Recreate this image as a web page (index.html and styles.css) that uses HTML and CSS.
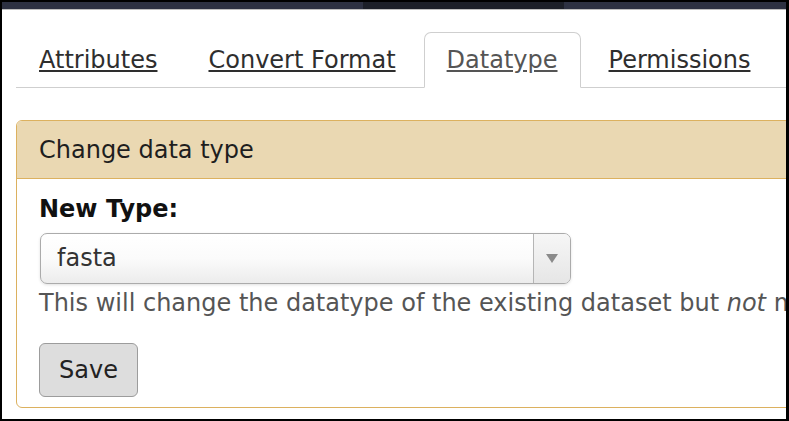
FILE: index.html
```html
<!DOCTYPE html>
<html>
<head>
<meta charset="utf-8">
<link rel="stylesheet" href="styles.css">
</head>
<body>
<div class="frame">
  <div class="topbar">
    <div class="seg seg-a"></div>
    <div class="seg seg-b"></div>
    <div class="seg seg-c"></div>
  </div>
  <div class="content">
    <ul class="tabs">
      <li class="tab"><a href="#">Attributes</a></li>
      <li class="tab"><a href="#">Convert Format</a></li>
      <li class="tab active"><a href="#">Datatype</a></li>
      <li class="tab"><a href="#">Permissions</a></li>
    </ul>
    <div class="panel">
      <div class="panel-head">Change data type</div>
      <div class="panel-body">
        <label class="field-label">New Type:</label>
        <div class="select">
          <span class="select-value">fasta</span>
          <span class="select-arrow"><span class="tri"></span></span>
        </div>
        <div class="help">This will change the datatype of the existing dataset but <em>not</em> modify its contents.</div>
        <button class="btn">Save</button>
      </div>
    </div>
  </div>
</div>
</body>
</html>
```

FILE: styles.css
```css
html, body {
  margin: 0;
  padding: 0;
  background: #000;
}
.frame {
  margin: 2px 3px 2px 2px;
  height: 417px;
  background: #fff;
  overflow: hidden;
  font-family: "DejaVu Sans", Verdana, sans-serif;
  font-size: 24px;
}
.topbar {
  display: flex;
  height: 7px;
  border-bottom: 1px solid #bdbdbd;
}
.seg-a { width: 361px; background: #2d3142; }
.seg-b { width: 201px; background: #1c1f28; }
.seg-c { flex: 1; background: #2d3142; }

.content {
  padding: 22px 0 0 14px;
}
.tabs {
  display: flex;
  list-style: none;
  margin: 0;
  padding: 0;
  border-bottom: 1px solid #cfcfcf;
  white-space: nowrap;
}
.tab {
  margin: 0 5px -1px 0;
  padding: 13px 22px;
  line-height: 28px;
  border: 1px solid transparent;
  border-radius: 7px 7px 0 0;
}
.tab a {
  color: #2e2e2e;
  text-decoration: underline;
}
.tab.active {
  border-color: #cfcfcf #cfcfcf transparent;
  background: #fff;
}
.tab.active a {
  color: #555;
}

.panel {
  margin-top: 32px;
  width: 820px;
  border: 1px solid #dcb15f;
  border-radius: 6px;
}
.panel-head {
  background: #ead8b2;
  border-bottom: 1px solid #dcb15f;
  border-radius: 5px 5px 0 0;
  padding: 15px 22px 14px;
  line-height: 28px;
  color: #1e1e1e;
}
.panel-body {
  padding: 16px 22px 10px;
}
.field-label {
  display: block;
  font-weight: bold;
  line-height: 28px;
  color: #111;
}
.select {
  margin-top: 10px;
  width: 529px;
  height: 49px;
  margin-left: 1px;
  border: 1px solid #ababab;
  border-radius: 7px;
  display: flex;
  background: linear-gradient(#ffffff 0%, #fbfbfb 50%, #ececec 100%);
  box-shadow: 0 1px 3px rgba(0, 0, 0, 0.12);
}
.select-value {
  flex: 1;
  padding-left: 16px;
  line-height: 49px;
  color: #333;
}
.select-arrow {
  width: 36px;
  border-left: 1px solid #b5b5b5;
  display: flex;
  align-items: center;
  justify-content: center;
  background: linear-gradient(#f6f6f6, #e6e6e6);
  border-radius: 0 6px 6px 0;
}
.tri {
  width: 0;
  height: 0;
  border-left: 6px solid transparent;
  border-right: 6px solid transparent;
  border-top: 9px solid #8a8a8a;
}
.help {
  margin-top: 5px;
  line-height: 28px;
  color: #555;
  white-space: nowrap;
}
.btn {
  margin-top: 26px;
  width: 99px;
  height: 54px;
  background: #dddddd;
  border: 1px solid #9c9c9c;
  border-radius: 6px;
  font-family: "DejaVu Sans", Verdana, sans-serif;
  font-size: 24px;
  color: #222;
  padding: 0;
  display: block;
}
```
